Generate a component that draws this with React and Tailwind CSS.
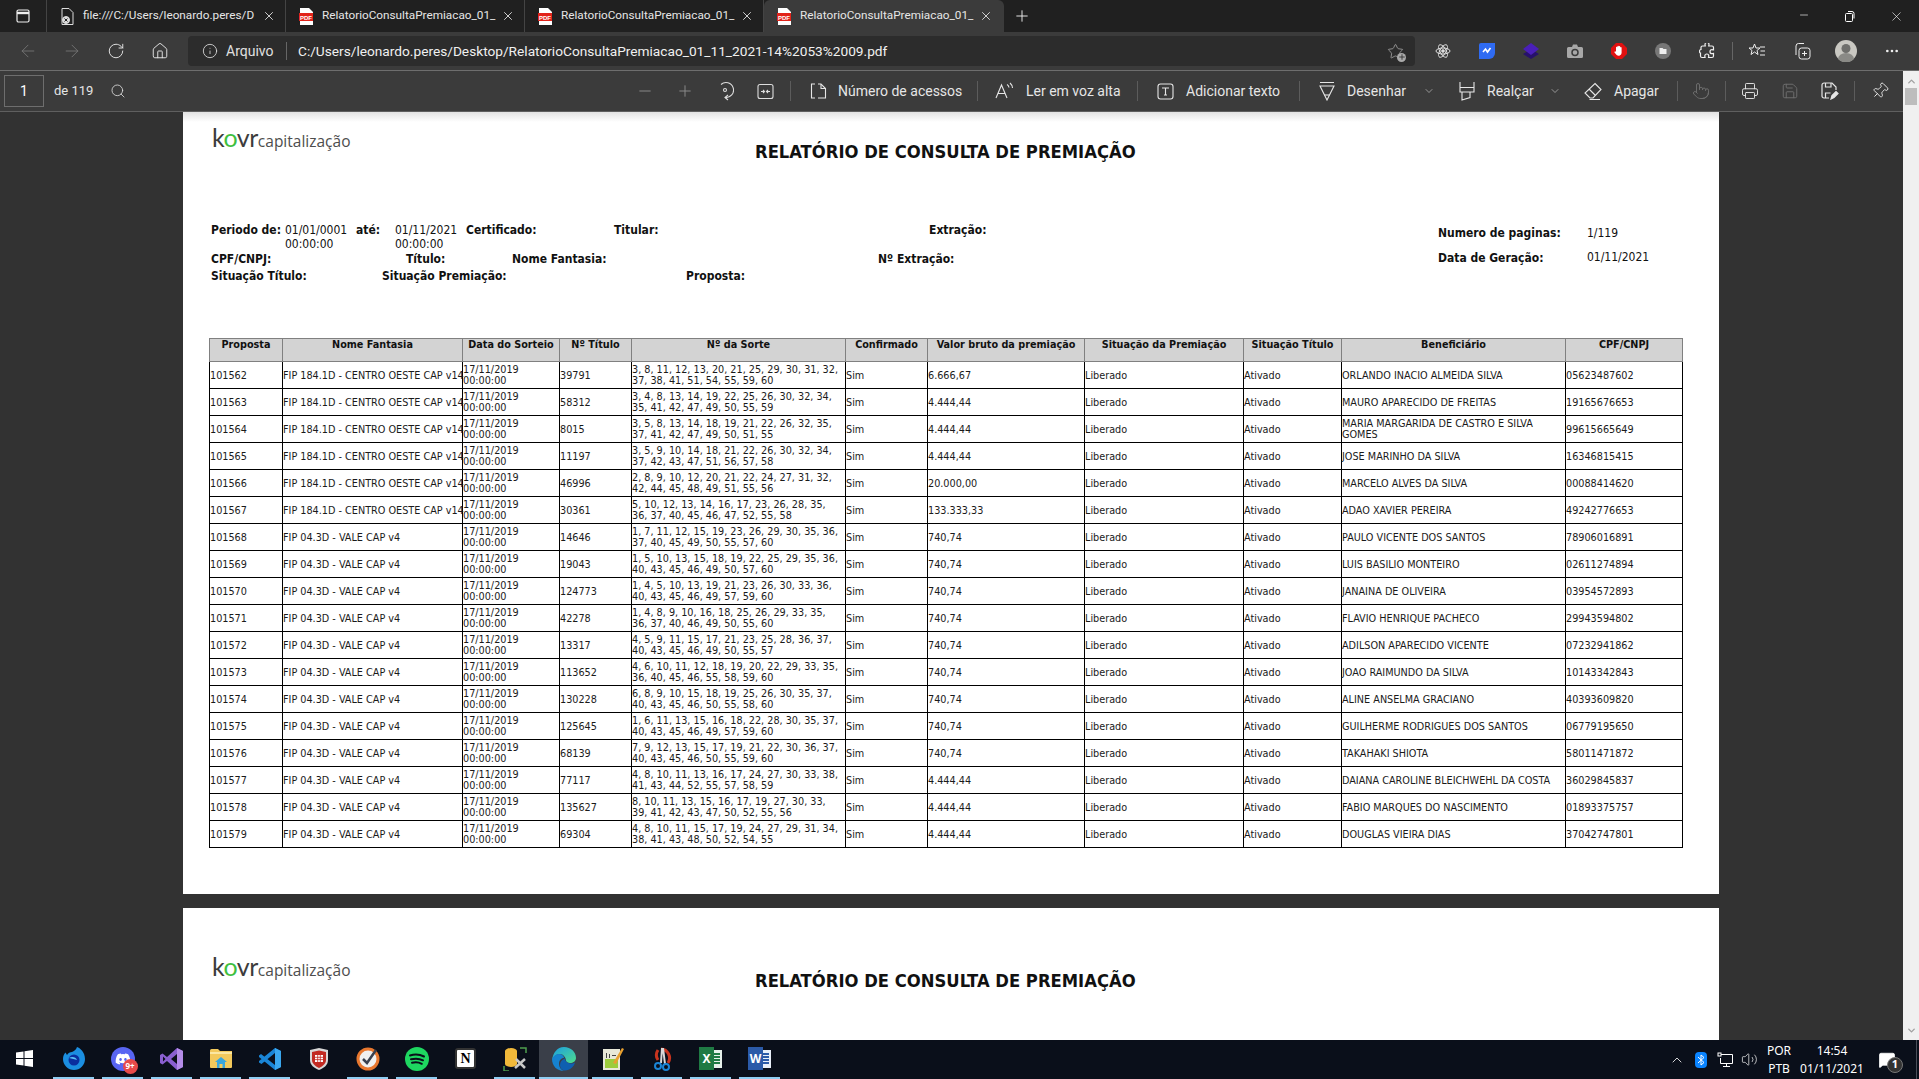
import {
  ArrowLeft, ArrowRight, RotateCw, Home, Info, Star, Search, Minus, Plus, Printer, Save, Pin, ChevronDown,
  Pointer, MoreHorizontal, X, ChevronUp, Volume2, MessageSquare,
} from 'lucide-react'
import { FaDiscord } from 'react-icons/fa'

const ROWS = [
  ['101562', 'FIP 184.1D - CENTRO OESTE CAP v14', '39791', '3, 8, 11, 12, 13, 20, 21, 25, 29, 30, 31, 32,', '37, 38, 41, 51, 54, 55, 59, 60', '6.666,67', ['ORLANDO INACIO ALMEIDA SILVA'], '05623487602'],
  ['101563', 'FIP 184.1D - CENTRO OESTE CAP v14', '58312', '3, 4, 8, 13, 14, 19, 22, 25, 26, 30, 32, 34,', '35, 41, 42, 47, 49, 50, 55, 59', '4.444,44', ['MAURO APARECIDO DE FREITAS'], '19165676653'],
  ['101564', 'FIP 184.1D - CENTRO OESTE CAP v14', '8015', '3, 5, 8, 13, 14, 18, 19, 21, 22, 26, 32, 35,', '37, 41, 42, 47, 49, 50, 51, 55', '4.444,44', ['MARIA MARGARIDA DE CASTRO E SILVA', 'GOMES'], '99615665649'],
  ['101565', 'FIP 184.1D - CENTRO OESTE CAP v14', '11197', '3, 5, 9, 10, 14, 18, 21, 22, 26, 30, 32, 34,', '37, 42, 43, 47, 51, 56, 57, 58', '4.444,44', ['JOSE MARINHO DA SILVA'], '16346815415'],
  ['101566', 'FIP 184.1D - CENTRO OESTE CAP v14', '46996', '2, 8, 9, 10, 12, 20, 21, 22, 24, 27, 31, 32,', '42, 44, 45, 48, 49, 51, 55, 56', '20.000,00', ['MARCELO ALVES DA SILVA'], '00088414620'],
  ['101567', 'FIP 184.1D - CENTRO OESTE CAP v14', '30361', '5, 10, 12, 13, 14, 16, 17, 23, 26, 28, 35,', '36, 37, 40, 45, 46, 47, 52, 55, 58', '133.333,33', ['ADAO XAVIER PEREIRA'], '49242776653'],
  ['101568', 'FIP 04.3D - VALE CAP v4', '14646', '1, 7, 11, 12, 15, 19, 23, 26, 29, 30, 35, 36,', '37, 40, 45, 49, 50, 55, 57, 60', '740,74', ['PAULO VICENTE DOS SANTOS'], '78906016891'],
  ['101569', 'FIP 04.3D - VALE CAP v4', '19043', '1, 5, 10, 13, 15, 18, 19, 22, 25, 29, 35, 36,', '40, 43, 45, 46, 49, 50, 57, 60', '740,74', ['LUIS BASILIO MONTEIRO'], '02611274894'],
  ['101570', 'FIP 04.3D - VALE CAP v4', '124773', '1, 4, 5, 10, 13, 19, 21, 23, 26, 30, 33, 36,', '40, 43, 45, 46, 49, 57, 59, 60', '740,74', ['JANAINA DE OLIVEIRA'], '03954572893'],
  ['101571', 'FIP 04.3D - VALE CAP v4', '42278', '1, 4, 8, 9, 10, 16, 18, 25, 26, 29, 33, 35,', '36, 37, 40, 46, 49, 50, 55, 60', '740,74', ['FLAVIO HENRIQUE PACHECO'], '29943594802'],
  ['101572', 'FIP 04.3D - VALE CAP v4', '13317', '4, 5, 9, 11, 15, 17, 21, 23, 25, 28, 36, 37,', '40, 43, 45, 46, 49, 50, 55, 57', '740,74', ['ADILSON APARECIDO VICENTE'], '07232941862'],
  ['101573', 'FIP 04.3D - VALE CAP v4', '113652', '4, 6, 10, 11, 12, 18, 19, 20, 22, 29, 33, 35,', '36, 40, 45, 46, 55, 58, 59, 60', '740,74', ['JOAO RAIMUNDO DA SILVA'], '10143342843'],
  ['101574', 'FIP 04.3D - VALE CAP v4', '130228', '6, 8, 9, 10, 15, 18, 19, 25, 26, 30, 35, 37,', '40, 43, 45, 46, 50, 55, 58, 60', '740,74', ['ALINE ANSELMA GRACIANO'], '40393609820'],
  ['101575', 'FIP 04.3D - VALE CAP v4', '125645', '1, 6, 11, 13, 15, 16, 18, 22, 28, 30, 35, 37,', '40, 43, 45, 46, 49, 57, 59, 60', '740,74', ['GUILHERME RODRIGUES DOS SANTOS'], '06779195650'],
  ['101576', 'FIP 04.3D - VALE CAP v4', '68139', '7, 9, 12, 13, 15, 17, 19, 21, 22, 30, 36, 37,', '40, 43, 45, 46, 50, 55, 59, 60', '740,74', ['TAKAHAKI SHIOTA'], '58011471872'],
  ['101577', 'FIP 04.3D - VALE CAP v4', '77117', '4, 8, 10, 11, 13, 16, 17, 24, 27, 30, 33, 38,', '41, 43, 44, 52, 55, 57, 58, 59', '4.444,44', ['DAIANA CAROLINE BLEICHWEHL DA COSTA'], '36029845837'],
  ['101578', 'FIP 04.3D - VALE CAP v4', '135627', '8, 10, 11, 13, 15, 16, 17, 19, 27, 30, 33,', '39, 41, 42, 43, 47, 50, 52, 55, 56', '4.444,44', ['FABIO MARQUES DO NASCIMENTO'], '01893375757'],
  ['101579', 'FIP 04.3D - VALE CAP v4', '69304', '4, 8, 10, 11, 15, 17, 19, 24, 27, 29, 31, 34,', '38, 41, 43, 48, 50, 52, 54, 55', '4.444,44', ['DOUGLAS VIEIRA DIAS'], '37042747801'],
]

const HEADERS = ['Proposta', 'Nome Fantasia', 'Data do Sorteio', 'Nº Título', 'Nº da Sorte', 'Confirmado', 'Valor bruto da premiação', 'Situação da Premiação', 'Situação Título', 'Beneficiário', 'CPF/CNPJ']

const TABLE_WIDTHS = ['w-[73px]', 'w-[180px]', 'w-[97px]', 'w-[72px]', 'w-[214px]', 'w-[82px]', 'w-[157px]', 'w-[159px]', 'w-[98px]', 'w-[224px]', 'w-[117px]']

const ico = { size: 18, strokeWidth: 1.25 }

function PdfIcon() {
  return (
    <svg width="14" height="17" viewBox="0 0 14 17">
      <path d="M1 0h9l4 4v13H1z" fill="#fff" />
      <rect x="0" y="5" width="14" height="8" fill="#e2231a" />
      <text x="7" y="11.5" fontSize="6" fontWeight="700" fill="#fff" textAnchor="middle" fontFamily="Liberation Sans, sans-serif">PDF</text>
    </svg>
  )
}

function Tab({ title, active, file }) {
  return (
    <div className={active
      ? 'flex items-center w-[240px] h-8 bg-[#3b3b3b] rounded-t-md pl-[12px]'
      : 'flex items-center w-[239px] h-8 border-r border-[#444] pl-[12px]'}>
      <div className="w-[16px] flex justify-center">
        {file ? (
          <svg width="14" height="17" viewBox="0 0 14 17" fill="none" stroke="#ddd">
            <path d="M2 .5h7l4 4v12H2z" />
            <circle cx="6" cy="12" r="3.5" fill="#ddd" />
            <path d="M4.5 10.5l3 3m0-3l-3 3" stroke="#222" />
          </svg>
        ) : <PdfIcon />}
      </div>
      <span className="ml-[8px] w-[174px] whitespace-nowrap text-[11.75px] text-[#e6e6e6]">{title}</span>
      <X size={14} strokeWidth={1.5} className="ml-[5px] text-[#e6e6e6]" />
    </div>
  )
}

function TabBar() {
  return (
    <div className="flex items-center h-8 bg-[#202020]">
      <div className="flex justify-center items-center w-[47px] h-8 border-r border-[#444]">
        <svg width="16" height="16" viewBox="0 0 16 16" fill="none" stroke="#eee" strokeWidth="1.2">
          <rect x="2" y="2" width="12" height="12" rx="1.5" />
          <path d="M2 5h12" strokeWidth="2.4" />
        </svg>
      </div>
      <Tab file title="file:///C:/Users/leonardo.peres/D" />
      <Tab title="RelatorioConsultaPremiacao_01_" />
      <Tab title="RelatorioConsultaPremiacao_01_" />
      <Tab active title="RelatorioConsultaPremiacao_01_" />
      <Plus size={18} strokeWidth={1.25} className="ml-[9px] text-[#eee]" />
      <div className="flex ml-auto">
        <div className="flex justify-center w-[46px]"><Minus size={12} strokeWidth={1.25} className="text-white" /></div>
        <div className="flex justify-center items-center w-[46px]">
          <svg width="12" height="12" viewBox="0 0 12 12" fill="none" stroke="#fff">
            <rect x="1.5" y="3.5" width="7" height="8" rx="1" />
            <path d="M4 1.5h4a2 2 0 0 1 2 2v5" />
          </svg>
        </div>
        <div className="flex justify-center w-[46px]"><X size={15} strokeWidth={1} className="text-white" /></div>
      </div>
    </div>
  )
}

function NavBtn({ children, dim }) {
  return <div className={dim ? 'flex justify-center w-[44px] text-[#7a7a7a]' : 'flex justify-center w-[44px] text-[#e8e8e8]'}>{children}</div>
}

function AddressBar() {
  return (
    <div className="flex items-center h-[39px] bg-[#3b3b3b] border-b border-[#6e6e6e] pl-[6px]">
      <NavBtn dim><ArrowLeft size={20} strokeWidth={1} /></NavBtn>
      <NavBtn dim><ArrowRight size={20} strokeWidth={1} /></NavBtn>
      <NavBtn><RotateCw size={18} strokeWidth={1.25} /></NavBtn>
      <NavBtn><Home size={18} strokeWidth={1.25} /></NavBtn>
      <div className="flex items-center ml-[6px] w-[1227px] h-[30px] rounded bg-[#2c2c2c] pl-[14px]">
        <Info size={16} strokeWidth={1.25} className="text-[#e0e0e0]" />
        <span className="ml-[8px] w-[48px] whitespace-nowrap text-[14px] text-[#e0e0e0]">Arquivo</span>
        <div className="ml-[12px] w-px h-[18px] bg-[#666]" />
        <span className="ml-[11px] whitespace-nowrap text-[13.7px] text-[#f0f0f0]">C:/Users/leonardo.peres/Desktop/RelatorioConsultaPremiacao_01_11_2021-14%2053%2009.pdf</span>
        <div className="relative ml-auto mr-[11px] text-[#aaa]">
          <Star size={17} strokeWidth={1.1} />
          <div className="absolute -right-[2px] -bottom-[2px] flex justify-center items-center w-[9px] h-[9px] rounded-full bg-[#aaa] text-[#2c2c2c]"><Plus size={8} strokeWidth={2.5} /></div>
        </div>
      </div>
      <div className="flex items-center ml-[6px]">
        <NavBtn>
          <svg width="16" height="16" viewBox="-8 -8 16 16" fill="none" stroke="#ddd" strokeWidth="1">
            <ellipse rx="7" ry="3" />
            <ellipse rx="7" ry="3" transform="rotate(60)" />
            <ellipse rx="7" ry="3" transform="rotate(120)" />
            <circle r="1.3" fill="#ddd" />
          </svg>
        </NavBtn>
        <NavBtn>
          <svg width="16" height="18" viewBox="0 0 16 18">
            <path d="M2 1h14v10a6 6 0 0 1-6 6H0V3a2 2 0 0 1 2-2z" fill="#2f6bf2" />
            <path d="M4 10l2.5-3 2 3 3-4" fill="none" stroke="#fff" strokeWidth="1.6" />
          </svg>
        </NavBtn>
        <NavBtn>
          <svg width="16" height="16" viewBox="0 0 16 16">
            <path d="M8 6l8 5-8 5-8-5z" fill="#27116b" />
            <path d="M8 0l8 6-8 6-8-6z" fill="#4a1fb8" />
          </svg>
        </NavBtn>
        <NavBtn>
          <svg width="16" height="14" viewBox="0 0 16 14">
            <path d="M1.500 3H5l1-2.500h4l1 2.500h3.500A1.500 1.500 0 0 1 16 4.500v8a1.500 1.500 0 0 1-1.500 1.500h-13A1.500 1.500 0 0 1 0 12.500v-8A1.500 1.500 0 0 1 1.500 3z" fill="#a8a8a8" />
            <circle cx="8" cy="8.500" r="3" fill="none" stroke="#3b3b3b" strokeWidth="1.500" />
          </svg>
        </NavBtn>
        <NavBtn>
          <svg width="16" height="16" viewBox="0 0 16 16">
            <path d="M5 0h6l5 5v6l-5 5H5l-5-5V5z" fill="#e01010" />
            <path d="M5 8V4.500a.7.7 0 0 1 1.400 0V3.500a.7.7 0 0 1 1.400 0v.3a.7.7 0 0 1 1.400 0v1a.7.7 0 0 1 1.400 0V10a3 3 0 0 1-5 2L3.500 9.500c-.4-.7.5-1.300 1-.8z" fill="#fff" />
          </svg>
        </NavBtn>
        <NavBtn>
          <svg width="16" height="16" viewBox="0 0 16 16">
            <circle cx="8" cy="8" r="8" fill="#777" />
            <path d="M4.500 5h3l1 1h3v5h-7z" fill="#eee" />
          </svg>
        </NavBtn>
        <NavBtn>
          <svg width="16" height="16" viewBox="0 0 16 16" fill="none" stroke="#f0f0f0" strokeWidth="1.200">
            <path d="M6 1.500a2 2 0 0 1 4 0c0 .8-.3 1-.3 1.500h3.300a1.500 1.500 0 0 1 1.500 1.500v2.500c-.5 0-.7-.3-1.500-.3a2 2 0 0 0 0 4c.8 0 1-.3 1.500-.3v2.600a1.500 1.500 0 0 1-1.500 1.500H9.500c0-.5.300-.7.300-1.500a2 2 0 0 0-4 0c0 .8.300 1 .3 1.500H3a1.500 1.500 0 0 1-1.500-1.500v-3c-.5 0-1-.3-1-1.500s.5-2 1.500-2V4.500A1.500 1.500 0 0 1 3.500 3h2.800C6.300 2.500 6 2.300 6 1.500z" />
          </svg>
        </NavBtn>
        <div className="ml-[3px] w-px h-[18px] bg-[#666]" />
        <div className="flex justify-center w-[47px] text-[#eee]">
          <svg width="18" height="18" viewBox="0 0 18 18" fill="none" stroke="currentColor">
            <path d="M6.500 2l1.500 4h4l-3 2.500 1 4-3.500-2.500L3 12.500l1-4-3-2.500h4z" />
            <path d="M12 5h5M12.500 9H17M12 13h5" />
          </svg>
        </div>
        <div className="flex justify-center w-[44px] text-[#eee]">
          <svg width="18" height="18" viewBox="0 0 18 18" fill="none" stroke="currentColor">
            <path d="M3 13V4a2.500 2.500 0 0 1 2.500-2.500H11" />
            <rect x="6" y="6" width="11" height="11" rx="2.500" />
            <path d="M11.500 9v5M9 11.500h5" />
          </svg>
        </div>
        <div className="flex justify-center w-[44px]">
          <svg width="22" height="22" viewBox="0 0 22 22">
            <circle cx="11" cy="11" r="11" fill="#c9c8c2" />
            <circle cx="11" cy="8.500" r="4.500" fill="#6f6f6c" />
            <path d="M3 19a8 6 0 0 1 16 0 11 11 0 0 1-16 0z" fill="#8a8a86" />
          </svg>
        </div>
        <div className="flex justify-center w-[48px] text-[#eee]"><MoreHorizontal size={16} strokeWidth={2} /></div>
      </div>
    </div>
  )
}

function Sep({ className }) {
  return <div className={`w-px h-[20px] bg-[#5c5c5c] ${className}`} />
}

function ToolLabel({ className, children }) {
  return <span className={`whitespace-nowrap text-[14px] text-[#e6e6e6] ${className}`}>{children}</span>
}

function Slot({ className = '', children }) {
  return <div className={`flex justify-center w-[20px] text-[#e6e6e6] ${className}`}>{children}</div>
}

function PdfToolbar() {
  return (
    <div className="flex items-center h-[41px] bg-[#3b3b3b] border-b border-[#5f5f5f] pl-[4px]">
      <div className="flex justify-center items-center w-[40px] h-[32px] border border-[#6e6e6e] text-[14px] text-white">1</div>
      <span className="ml-[10px] w-[36px] whitespace-nowrap text-[13px] text-[#e6e6e6]">de 119</span>
      <Search size={16} strokeWidth={1.25} className="ml-[20px] text-[#ddd]" />
      <div className="flex justify-center w-[40px] ml-[499px] text-[#8d8d8d]"><Minus {...ico} /></div>
      <div className="flex justify-center w-[40px] text-[#8d8d8d]"><Plus {...ico} /></div>
      <div className="flex justify-center w-[40px] text-[#ddd]">
        <svg width="18" height="20" viewBox="0 0 18 20" fill="none" stroke="currentColor" strokeWidth="1.1">
          <path d="M5 3.500A7.500 7.500 0 1 1 9 16.500" />
          <circle cx="9" cy="9" r="1.500" />
          <path d="M12 14l-3 2.500 3 2.500" />
        </svg>
      </div>
      <div className="flex justify-center w-[40px] text-[#ddd]">
        <svg width="17" height="17" viewBox="0 0 17 17" fill="none" stroke="currentColor" strokeWidth="1.1">
          <rect x="1" y="1.500" width="15" height="14" rx="2" />
          <path d="M4 8.500h3M10 8.500h3" />
          <path d="M6 7l1.500 1.500L6 10M11 7L9.500 8.500 11 10" />
        </svg>
      </div>
      <Sep className="ml-[5px]" />
      <Slot className="ml-[17px]">
        <svg width="17" height="16" viewBox="0 0 17 16" fill="none" stroke="currentColor" strokeWidth="1.1">
          <path d="M5 1H1.500v14H5M8 1h3l4.500 4.500V15H8" />
          <path d="M11 1v4.500h4.500" />
        </svg>
      </Slot>
      <ToolLabel className="ml-[10px] w-[122px]">Número de acessos</ToolLabel>
      <Sep className="ml-[17px]" />
      <Slot className="ml-[17px]">
        <svg width="20" height="18" viewBox="0 0 20 18" fill="none" stroke="currentColor" strokeWidth="1.1">
          <path d="M1 16L6.500 3 12 16M3 11.500h7" />
          <path d="M12 2.500a4 4 0 0 1 2 3M15 1a7 7 0 0 1 2.500 5" />
        </svg>
      </Slot>
      <ToolLabel className="ml-[11px] w-[93px]">Ler em voz alta</ToolLabel>
      <Sep className="ml-[18px]" />
      <Slot className="ml-[17px]">
        <svg width="17" height="17" viewBox="0 0 17 17" fill="none" stroke="currentColor" strokeWidth="1.1">
          <rect x="1" y="1" width="15" height="15" rx="2.500" />
          <path d="M5 5h7M8.500 5v7M7 12h3" />
        </svg>
      </Slot>
      <ToolLabel className="ml-[11px] w-[94px]">Adicionar texto</ToolLabel>
      <Sep className="ml-[19px]" />
      <Slot className="ml-[17px]">
        <svg width="16" height="20" viewBox="0 0 16 20" fill="none" stroke="currentColor" strokeWidth="1.1">
          <path d="M1 1.500h14M1 5h14L8 19z" />
          <path d="M5.500 14h5" />
        </svg>
      </Slot>
      <ToolLabel className="ml-[10px] w-[58px]">Desenhar</ToolLabel>
      <div className="flex justify-center ml-[16px] w-[16px] text-[#ccc]"><ChevronDown size={12} strokeWidth={1.25} /></div>
      <Slot className="ml-[20px]">
        <svg width="16" height="20" viewBox="0 0 16 20" fill="none" stroke="currentColor" strokeWidth="1.1">
          <path d="M1 1v5.500h14V1M1 6.500V11h14V6.500M3 11v8l8-2.500V11" />
        </svg>
      </Slot>
      <ToolLabel className="ml-[10px] w-[45px]">Realçar</ToolLabel>
      <div className="flex justify-center ml-[15px] w-[16px] text-[#ccc]"><ChevronDown size={12} strokeWidth={1.25} /></div>
      <Slot className="ml-[20px]">
        <svg width="18" height="18" viewBox="0 0 18 18" fill="none" stroke="currentColor" strokeWidth="1.1">
          <path d="M11 1.500l6 6-8 8.500H6L1 11zM5 7l6 6M5.500 17.500H16" />
        </svg>
      </Slot>
      <ToolLabel className="ml-[11px] w-[45px]">Apagar</ToolLabel>
      <Sep className="ml-[18px]" />
      <Slot className="ml-[13px]"><div className="text-[#6f6f6f]"><Pointer {...ico} /></div></Slot>
      <Sep className="ml-[14px]" />
      <Slot className="ml-[14px]"><Printer {...ico} /></Slot>
      <Slot className="ml-[20px]"><div className="text-[#6f6f6f]"><Save {...ico} /></div></Slot>
      <Slot className="ml-[20px]">
        <svg width="18" height="18" viewBox="0 0 18 18" fill="none" stroke="currentColor" strokeWidth="1.2">
          <path d="M8 16H3a2 2 0 0 1-2-2V3a2 2 0 0 1 2-2h8l4 4v3" />
          <path d="M4.500 1v4H10V1M4.500 16v-5h5" />
          <path d="M10 17l1-3.500 4-4 2 2-4 4z" fill="currentColor" />
        </svg>
      </Slot>
      <Sep className="ml-[14px]" />
      <Slot className="ml-[15px]"><Pin {...ico} className="rotate-45" /></Slot>
    </div>
  )
}

function Logo() {
  return (
    <div className="flex items-baseline w-[546px] h-[40px] pl-[3px] font-['Lato',sans-serif] [font-stretch:normal]">
      <span className="text-[25px] leading-[27px] text-[#3c3c3c] tracking-[-0.5px]">k<span className="text-[#3fbf3f]">o</span>vr</span>
      <span className="text-[15.5px] text-[#4d4d4d] font-['Open_Sans',sans-serif]">capitalização</span>
    </div>
  )
}

function PageHeader() {
  return (
    <div className="flex pl-[26px]">
      <Logo />
      <h1 className="pt-[17px] whitespace-nowrap text-[18.25px] leading-[22px] font-bold text-[#111]">RELATÓRIO DE CONSULTA DE PREMIAÇÃO</h1>
    </div>
  )
}

function Label({ className = '', children }) {
  return <span className={`font-bold whitespace-nowrap ${className}`}>{children}</span>
}

function MetaBlock() {
  return (
    <div className="flex mt-[59px] ml-[28px] text-[12px] leading-[14px] text-[#111]">
      <div className="flex flex-col w-[1227px]">
        <div className="flex h-[29px]">
          <Label className="w-[74px]">Periodo de:</Label>
          <div className="w-[71px]">01/01/0001<br />00:00:00</div>
          <Label className="w-[39px]">até:</Label>
          <div className="w-[71px]">01/11/2021<br />00:00:00</div>
          <Label className="w-[148px]">Certificado:</Label>
          <Label className="w-[315px]">Titular:</Label>
          <Label>Extração:</Label>
        </div>
        <div className="flex h-[17px]">
          <Label className="w-[195px]">CPF/CNPJ:</Label>
          <Label className="w-[106px]">Título:</Label>
          <Label className="w-[366px]">Nome Fantasia:</Label>
          <Label>Nº Extração:</Label>
        </div>
        <div className="flex h-[17px]">
          <Label className="w-[171px]">Situação Título:</Label>
          <Label className="w-[304px]">Situação Premiação:</Label>
          <Label>Proposta:</Label>
        </div>
      </div>
      <div className="flex flex-col pt-[3px] gap-[11px]">
        <div className="flex">
          <Label className="w-[149px]">Numero de paginas:</Label>
          <span>1/119</span>
        </div>
        <div className="flex">
          <Label className="w-[149px]">Data de Geração:</Label>
          <span className="-mt-[1px]">01/11/2021</span>
        </div>
      </div>
    </div>
  )
}

function ReportTable() {
  return (
    <table className="mt-[52px] ml-[26px] w-[1473px] table-fixed border-collapse text-[10.75px] leading-[11px] text-[#1a1a1a]">
      <colgroup>
        {TABLE_WIDTHS.map((w, i) => <col key={i} className={w} />)}
      </colgroup>
      <thead>
        <tr className="h-[23px]">
          {HEADERS.map(h => (
            <th key={h} className="border border-[#808080] bg-[#d3d3d3] align-top pt-0 font-bold text-[10.75px] whitespace-nowrap text-[#111]">{h}</th>
          ))}
        </tr>
      </thead>
      <tbody>
        {ROWS.map(r => (
          <tr key={r[0]} className="h-[27px] [&>td]:border [&>td]:border-black [&>td]:whitespace-nowrap">
            <td>{r[0]}</td>
            <td>{r[1]}</td>
            <td>17/11/2019<br />00:00:00</td>
            <td>{r[2]}</td>
            <td>{r[3]}<br />{r[4]}</td>
            <td>Sim</td>
            <td>{r[5]}</td>
            <td>Liberado</td>
            <td>Ativado</td>
            <td>{r[6].map((l, i) => <div key={i}>{l}</div>)}</td>
            <td>{r[7]}</td>
          </tr>
        ))}
      </tbody>
    </table>
  )
}

function Viewer() {
  return (
    <div className="flex-1 min-h-0 overflow-hidden bg-[#323232] pl-[183px] font-['DejaVu_Sans_Condensed','DejaVu_Sans',sans-serif] [font-stretch:condensed]">
      <div className="w-[1536px] h-[782px] overflow-hidden bg-[linear-gradient(#e2e2e2,#ffffff_10px)] pt-[12px]">
        <PageHeader />
        <MetaBlock />
        <ReportTable />
      </div>
      <div className="mt-[14px] w-[1536px] h-[200px] bg-white pt-[45px]">
        <PageHeader />
      </div>
    </div>
  )
}

function Scrollbar() {
  return (
    <div className="flex flex-col items-center w-[16px] bg-[#f0f0f0] pt-[5px] pb-[4px]">
      <ChevronUp size={11} strokeWidth={3} className="text-[#a0a0a0]" />
      <div className="mt-[1px] w-[12px] h-[17px] bg-[#bdbdbd]" />
      <ChevronDown size={11} strokeWidth={3} className="mt-auto text-[#a0a0a0]" />
    </div>
  )
}

function TaskIcon({ on, active, children }) {
  return (
    <div className={active ? 'flex flex-col w-[49px] h-full bg-[#3a3f49]' : 'flex flex-col w-[49px] h-full'}>
      <div className="flex flex-1 justify-center items-center">{children}</div>
      <div className={on ? (active ? 'h-[2px] bg-[#8fcdf2]' : 'mx-[4px] h-[2px] bg-[#8fcdf2]') : 'h-[2px]'} />
    </div>
  )
}

function Taskbar() {
  return (
    <div className="flex items-center h-[39px] bg-[#0a0f1a] text-white font-['Noto_Sans',sans-serif]">
      <TaskIcon>
        <svg width="17" height="17" viewBox="0 0 17 17" fill="#fff">
          <path d="M0 2.500l7.500-1v6.500H0zM8.500 1.300L17 0v8H8.500zM0 9h7.500v6.500l-7.500-1zM8.500 9H17v8l-8.500-1.300z" />
        </svg>
      </TaskIcon>
      <TaskIcon on>
        <svg width="24" height="24" viewBox="0 0 24 24">
          <path d="M12 23a11 11 0 0 1-11-11c0-3 1-5 2.500-6.500L5 8c1-2 3-3 5-3 2-1 4-2 5-5 3 1 8 5 8 12a11 11 0 0 1-11 11z" fill="#1b8ee0" />
          <circle cx="12" cy="13" r="5.500" fill="#0a2e9e" />
          <path d="M7 11c3-2 7-1 8 2-2-1-5-1-8-2z" fill="#58c4f7" />
        </svg>
      </TaskIcon>
      <TaskIcon on>
        <div className="relative flex justify-center items-center w-[24px] h-[24px] rounded-full bg-[#5865f2]">
          <FaDiscord size={16} className="text-white" />
          <div className="absolute -right-[3px] -bottom-[3px] flex justify-center items-center w-[15px] h-[15px] rounded-full bg-[#e84a4a] text-[8px] font-bold">9+</div>
        </div>
      </TaskIcon>
      <TaskIcon on>
        <svg width="24" height="24" viewBox="0 0 24 24">
          <path d="M17 1l6 3v16l-6 3L7 14l-4.500 3.500L0 16V8l2.500-1.500L7 10z" fill="#8a5fd0" />
          <path d="M17 7v10l-6-5zM3 9.500v5L5.500 12z" fill="#0a0f1a" />
          <path d="M17 1l6 3v16l-6 3z" fill="#b48ce8" />
        </svg>
      </TaskIcon>
      <TaskIcon on>
        <svg width="22" height="19" viewBox="0 0 22 19">
          <path d="M0 1.500A1.500 1.500 0 0 1 1.500 0H8l2 2h12v16a1 1 0 0 1-1 1H1a1 1 0 0 1-1-1z" fill="#f3c95c" />
          <rect x="0" y="3" width="22" height="2" fill="#fbe7a2" />
          <path d="M11 8l6 5h-2v6H7v-6H5z" fill="#3aa6dc" />
          <rect x="9.500" y="15" width="3" height="4" fill="#f3c95c" />
        </svg>
      </TaskIcon>
      <TaskIcon on>
        <svg width="24" height="24" viewBox="0 0 24 24">
          <path d="M17 1l6 3v16l-6 3L1 10V8.500L3 7l14 11V6L3.500 17 1 15.500V14z" fill="#1a85d6" />
          <path d="M17 1l6 3v16l-6 3z" fill="#3aa7ee" />
        </svg>
      </TaskIcon>
      <TaskIcon>
        <svg width="20" height="22" viewBox="0 0 20 22">
          <path d="M1 2l9-2 9 2v10c0 5-4 8-9 10-5-2-9-5-9-10z" fill="#d8d8d8" />
          <path d="M3 4l7-1.500L17 4v8c0 3.500-3 6-7 8-4-2-7-4.500-7-8z" fill="#c22a22" />
          <path d="M6 7h8v7H6z" fill="#fff" />
          <path d="M6 9.300h8M6 11.600h8M8.700 7v7M11.300 7v7" stroke="#c22a22" strokeWidth=".8" />
        </svg>
      </TaskIcon>
      <TaskIcon on>
        <svg width="24" height="24" viewBox="0 0 24 24">
          <circle cx="12" cy="12" r="10" fill="#f0f0f0" stroke="#e8772e" strokeWidth="3" />
          <path d="M7 12l4 4 9-13" fill="none" stroke="#39404f" strokeWidth="2.500" />
        </svg>
      </TaskIcon>
      <TaskIcon on>
        <svg width="24" height="24" viewBox="0 0 24 24" fill="none">
          <circle cx="12" cy="12" r="12" fill="#1ed760" />
          <path d="M5 8.500c5-1.500 10-1 14 1M6 12.300c4-1 8.500-.8 12 1M7 15.800c3.500-.8 7-.5 9.800 1" stroke="#0a0f1a" strokeWidth="2" strokeLinecap="round" />
        </svg>
      </TaskIcon>
      <TaskIcon>
        <div className="flex justify-center items-center w-[21px] h-[21px] rounded-[3px] border-2 border-[#333] bg-white text-[14px] font-bold text-black font-['Liberation_Serif',serif]">N</div>
      </TaskIcon>
      <TaskIcon on>
        <svg width="24" height="24" viewBox="0 0 24 24">
          <path d="M2 4a6 3 0 0 1 12 0v13a6 3 0 0 1-12 0z" fill="#f1b93a" />
          <path d="M1 24v-5M1 24h5M17 1h6v5" fill="none" stroke="#4fa04f" strokeWidth="1.500" />
          <path d="M12 21l10-9M13 12l9 9" stroke="#c8c8c8" strokeWidth="2.500" />
        </svg>
      </TaskIcon>
      <TaskIcon on active>
        <svg width="24" height="24" viewBox="0 0 24 24">
          <defs>
            <linearGradient id="edgeTop" x1="0" y1="0" x2="1" y2="1">
              <stop offset="0" stopColor="#1b9de2" />
              <stop offset="1" stopColor="#4fde8c" />
            </linearGradient>
          </defs>
          <path d="M12 0c7 0 12 5 12 11 0 3-3 5-6 5-2 0-4-1-4-2.500 0-3-3-7-7-6.500-3 .5-6 3-7 6C1 6 5 0 12 0z" fill="url(#edgeTop)" />
          <path d="M0 12c1-3 4-5 7-5 3 0 5 2 5 4-3 0-5 2.500-5 6 0 3 2 6 5 7C5 24 0 19 0 12z" fill="#1682cf" />
          <path d="M8 18c0-3 2-5.500 5-6.500 0 2 2 5 6 5 2 0 3-.5 4-1-1 4-5 8-10 8-3 0-5-2.500-5-5.500z" fill="#0f5fb0" />
        </svg>
      </TaskIcon>
      <TaskIcon on>
        <svg width="22" height="24" viewBox="0 0 22 24">
          <path d="M1 2h17v21H1z" fill="#e8e8d8" />
          <path d="M3 12h13v9H3z" fill="#9ccc3c" />
          <path d="M4 6h1v5H4zM7 7h1v4H7zM10 8h4v1h-4z" fill="#444" />
          <path d="M11 16L20 1l2 1-8 15z" fill="#e8a030" />
        </svg>
      </TaskIcon>
      <TaskIcon on>
        <svg width="20" height="24" viewBox="0 0 20 24" fill="none">
          <path d="M9 2a9 9 0 0 1 7 14" stroke="#c8341e" strokeWidth="3" />
          <path d="M6 3a9 9 0 0 0 0 10" stroke="#c8341e" strokeWidth="3" />
          <path d="M10 1l-1 15M11 1l2 16" stroke="#d8d8d8" strokeWidth="2" />
          <circle cx="6" cy="19" r="3" stroke="#1a85d6" strokeWidth="2" />
          <circle cx="14" cy="20" r="3" stroke="#1a85d6" strokeWidth="2" />
        </svg>
      </TaskIcon>
      <TaskIcon on>
        <div className="relative flex justify-end items-center w-[23px] h-[23px]">
          <div className="flex flex-col justify-center gap-[1px] w-[14px] h-[18px] bg-[#e6f0ea] px-[2px]">
            <div className="h-[2px] bg-[#1f7a44]" />
            <div className="h-[2px] bg-[#1f7a44]" />
            <div className="h-[2px] bg-[#1f7a44]" />
            <div className="h-[2px] bg-[#1f7a44]" />
          </div>
          <div className="absolute left-0 top-0 flex justify-center items-center w-[15px] h-[23px] bg-[#1f7a44] text-[12px] font-bold">X</div>
        </div>
      </TaskIcon>
      <TaskIcon on>
        <div className="relative flex justify-end items-center w-[23px] h-[23px]">
          <div className="flex flex-col justify-center gap-[1px] w-[14px] h-[18px] bg-[#e8eef8] px-[2px]">
            <div className="h-[2px] bg-[#2b5aa8]" />
            <div className="h-[2px] bg-[#2b5aa8]" />
            <div className="h-[2px] bg-[#2b5aa8]" />
            <div className="h-[2px] bg-[#2b5aa8]" />
          </div>
          <div className="absolute left-0 top-0 flex justify-center items-center w-[15px] h-[23px] bg-[#2b5aa8] text-[12px] font-bold">W</div>
        </div>
      </TaskIcon>

      <div className="flex items-center ml-auto h-full">
        <div className="flex justify-center w-[24px]"><ChevronUp size={16} strokeWidth={1.25} /></div>
        <div className="flex justify-center w-[24px]">
          <div className="flex justify-center items-center w-[12px] h-[16px] rounded-[4px] bg-[#0a84ff]">
            <svg width="8" height="12" viewBox="0 0 8 12" fill="none" stroke="#fff"><path d="M1 3l6 5.500L4 11V1l3 2.500L1 9" /></svg>
          </div>
        </div>
        <div className="flex justify-center w-[24px]">
          <svg width="16" height="15" viewBox="0 0 16 15" fill="none" stroke="#fff">
            <path d="M4 2.500h11.500v9h-12V6M9.500 11.500v3M6 14.500h7" />
            <rect x="1" y="1" width="3" height="3" />
          </svg>
        </div>
        <div className="flex justify-center w-[24px]"><Volume2 size={17} strokeWidth={1} /></div>
        <div className="flex flex-col items-center w-[36px] text-[12px] leading-[18px]">
          <span>POR</span>
          <span>PTB</span>
        </div>
        <div className="flex flex-col items-center w-[70px] text-[12px] leading-[18px]">
          <span>14:54</span>
          <span>01/11/2021</span>
        </div>
        <div className="relative flex justify-center w-[40px]">
          <MessageSquare size={18} fill="#fff" strokeWidth={1} />
          <div className="absolute left-[20px] top-[6px] flex justify-center items-center w-[16px] h-[16px] rounded-full border border-[#777] bg-[#333] text-[11px] font-bold">1</div>
        </div>
        <div className="ml-[9px] mr-[2px] w-px h-full bg-[#4a4f59]" />
      </div>
    </div>
  )
}

export default function App() {
  return (
    <div className="flex flex-col w-screen h-screen overflow-hidden font-['Roboto',sans-serif]">
      <TabBar />
      <AddressBar />
      <div className="flex flex-1 min-h-0">
        <div className="flex flex-col flex-1 min-w-0">
          <PdfToolbar />
          <Viewer />
        </div>
        <Scrollbar />
      </div>
      <Taskbar />
    </div>
  )
}
